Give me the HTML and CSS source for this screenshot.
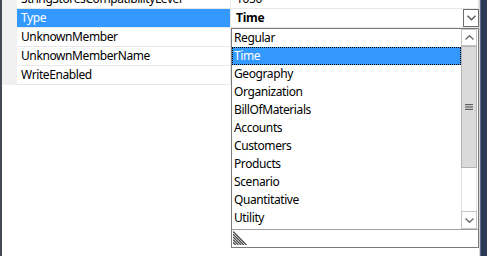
FILE: index.html
```html
<!DOCTYPE html>
<html>
<head>
<meta charset="utf-8">
<link rel="stylesheet" href="styles.css">
</head>
<body>
<div class="window">
  <div class="edge-left"></div>
  <div class="grid">
    <div class="row row-first">
      <div class="gutter"></div>
      <div class="name">StringStoresCompatibilityLevel</div>
      <div class="vline"></div>
      <div class="value">1050</div>
    </div>
    <div class="row">
      <div class="gutter"></div>
      <div class="name name-selected">Type</div>
      <div class="vline"></div>
      <div class="value value-combo">
        <span class="combo-text">Time</span>
        <span class="combo-btn">
          <svg width="9" height="6" viewBox="0 0 9 6"><polyline points="0.5,0.8 4.5,4.8 8.5,0.8" fill="none" stroke="#5a5a5a" stroke-width="1.5"/></svg>
        </span>
      </div>
    </div>
    <div class="row">
      <div class="gutter"></div>
      <div class="name">UnknownMember</div>
      <div class="vline"></div>
      <div class="value"></div>
    </div>
    <div class="row">
      <div class="gutter"></div>
      <div class="name">UnknownMemberName</div>
      <div class="vline"></div>
      <div class="value"></div>
    </div>
    <div class="row">
      <div class="gutter"></div>
      <div class="name">WriteEnabled</div>
      <div class="vline"></div>
      <div class="value"></div>
    </div>
    <div class="filler"></div>
  </div>
  <div class="edge-right-light"></div>
  <div class="edge-right"></div>

  <div class="dropdown">
    <div class="list-body">
      <ul class="items">
        <li class="item">Regular</li>
        <li class="item item-selected">Time</li>
        <li class="item">Geography</li>
        <li class="item">Organization</li>
        <li class="item">BillOfMaterials</li>
        <li class="item">Accounts</li>
        <li class="item">Customers</li>
        <li class="item">Products</li>
        <li class="item">Scenario</li>
        <li class="item">Quantitative</li>
        <li class="item">Utility</li>
      </ul>
      <div class="scrollbar">
        <div class="sb-btn sb-up">
          <svg width="9" height="5" viewBox="0 0 9 5"><polyline points="0.5,4.5 4.5,0.7 8.5,4.5" fill="none" stroke="#606060" stroke-width="1.2"/></svg>
        </div>
        <div class="sb-thumb">
          <svg width="8" height="6" viewBox="0 0 8 6"><rect x="0" y="0" width="8" height="1.2" fill="#606060"/><rect x="0" y="2.4" width="8" height="1.2" fill="#606060"/><rect x="0" y="4.8" width="8" height="1.2" fill="#606060"/></svg>
        </div>
        <div class="sb-track"></div>
        <div class="sb-btn sb-down">
          <svg width="9" height="5" viewBox="0 0 9 5"><polyline points="0.5,0.5 4.5,4.3 8.5,0.5" fill="none" stroke="#606060" stroke-width="1.2"/></svg>
        </div>
      </div>
      <div class="sb-gap"></div>
    </div>
    <div class="grip-area">
      <svg class="grip" width="14" height="14" viewBox="0 0 14 14">
        <g stroke="#4a4a4a" stroke-width="1.3">
          <line x1="0" y1="0.5" x2="13.5" y2="14"/>
          <line x1="0" y1="3.2" x2="10.8" y2="14"/>
          <line x1="0" y1="5.9" x2="8.1" y2="14"/>
          <line x1="0" y1="8.6" x2="5.4" y2="14"/>
          <line x1="0" y1="11.3" x2="2.7" y2="14"/>
        </g>
      </svg>
    </div>
  </div>
</div>
</body>
</html>
```

FILE: styles.css
```css
* { box-sizing: border-box; }
html, body { margin: 0; padding: 0; }
body {
  width: 487px;
  height: 256px;
  overflow: hidden;
  background: #fff;
  font-family: "Noto Sans", "Liberation Sans", sans-serif;
  font-size: 12px;
  letter-spacing: -0.4px;
  color: #000;
}
.window {
  position: relative;
  display: flex;
  width: 487px;
  height: 256px;
  overflow: hidden;
  background: #fff;
}
.edge-left { width: 2px; flex: none; background: #454955; }
.grid {
  width: 477px;
  flex: none;
  display: flex;
  flex-direction: column;
}
.row {
  display: flex;
  height: 19px;
  flex: none;
}
.row-first { margin-top: -10px; }
.gutter { width: 15px; flex: none; background: #f0f0f0; }
.name {
  width: 213px;
  flex: none;
  height: 19px;
  line-height: 18px;
  padding-left: 4px;
  border-bottom: 1px solid #e8e8e8;
  white-space: nowrap;
  overflow: hidden;
}
.name-selected { background: #3399ff; color: #fff; border-bottom-color: #e8e8e8; }
.vline { width: 1px; flex: none; background: #e8e8e8; }
.value {
  width: 248px;
  flex: none;
  height: 19px;
  line-height: 18px;
  padding-left: 5px;
  border-bottom: 1px solid #e8e8e8;
  border-right: 1px solid #e0e0e0;
  white-space: nowrap;
}
.value-combo {
  display: flex;
  align-items: flex-start;
  border-right: none;
}
.combo-text { font-weight: bold; flex: 1; letter-spacing: -0.2px; }
.combo-btn {
  width: 16px;
  height: 18px;
  flex: none;
  border: 1px solid #6e6e6e;
  background: #fff;
  display: flex;
  align-items: center;
  justify-content: center;
}
.filler { flex: 1; background: #fff; }
.edge-right-light { width: 1px; flex: none; background: #d6d6d6; }
.edge-right {
  width: 7px;
  flex: none;
  background: linear-gradient(to right, #5c6d8e 0, #5c6d8e 1px, #2b3a57 1px);
}

/* dropdown list (overlay) */
.dropdown {
  position: absolute;
  left: 231px;
  top: 28px;
  width: 248px;
  height: 220px;
  border: 1px solid #7a7a7a;
  background: #fff;
  display: flex;
  flex-direction: column;
}
.list-body { display: flex; height: 200px; flex: none; }
.items {
  list-style: none;
  margin: 0;
  padding: 0;
  width: 229px;
  flex: none;
}
.item {
  height: 18px;
  line-height: 18px;
  padding-left: 2px;
  white-space: nowrap;
}
.item-selected {
  background: #3399ff;
  color: #fff;
  outline: 1px dotted #000;
  outline-offset: -1px;
}
.scrollbar {
  width: 16px;
  flex: none;
  display: flex;
  flex-direction: column;
}
.sb-gap { width: 1px; flex: none; }
.sb-btn {
  background: #fff;
  border: 1px solid #c4c4c4;
  display: flex;
  align-items: center;
  justify-content: center;
  flex: none;
}
.sb-up { height: 17px; }
.sb-down { height: 18px; }
.sb-thumb {
  height: 122px;
  flex: none;
  background: #dadada;
  border: 1px solid #b4b4b4;
  display: flex;
  align-items: center;
  justify-content: center;
}
.sb-track {
  flex: 1;
  border-left: 1px solid #e2e2e2;
  border-right: 1px solid #e2e2e2;
}
.grip-area {
  flex: 1;
  border-top: 1px solid #a0a0a0;
  padding: 1px 0 0 1px;
}
.grip { display: block; }
```
